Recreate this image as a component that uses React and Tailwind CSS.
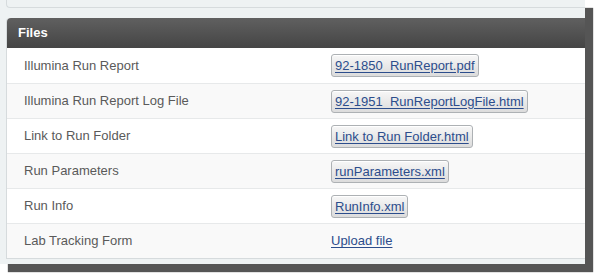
import React from 'react';

const rows = [
  { label: 'Illumina Run Report', file: '92-1850_RunReport.pdf' },
  { label: 'Illumina Run Report Log File', file: '92-1951_RunReportLogFile.html' },
  { label: 'Link to Run Folder', file: 'Link to Run Folder.html' },
  { label: 'Run Parameters', file: 'runParameters.xml' },
  { label: 'Run Info', file: 'RunInfo.xml' },
  { label: 'Lab Tracking Form', upload: 'Upload file' },
];

const FileButton = ({ name }) => (
  <span className="inline-flex h-[23px] items-center rounded-[3px] border border-[#adb1b4] bg-gradient-to-b from-[#f7f7f7] to-[#dcdcdc] px-[3px] shadow-[inset_0_1px_0_#fff]">
    <a href="#" className="text-[13px] leading-none text-[#2c4d8c] underline underline-offset-2">
      {name}
    </a>
  </span>
);

const App = () => {
  return (
    <div className="h-[280px] w-[599px] bg-white" style={{ fontFamily: '"Liberation Sans", Arial, sans-serif' }}>
      <div className="h-[264px] w-[585px] overflow-hidden bg-[#eef2f3] shadow-[8px_8px_1px_#555]">
        {/* top panel tail */}
        <div className="-mt-[4px] ml-[6px] h-[12px] w-[620px] rounded-bl-[4px] border-b border-l border-[#d6dbdd] bg-[#eef2f3]" />

        {/* Files panel */}
        <div className="ml-[6px] mt-[10px] w-[620px] rounded-t-[4px] border-b border-l border-[#d6dbdd] bg-white">
          <div className="flex h-[30px] items-center rounded-tl-[4px] bg-gradient-to-b from-[#606060] to-[#454545] px-[11px]">
            <h3 className="text-[13px] font-bold text-white">Files</h3>
          </div>
          {rows.map((row, i) => (
            <div
              key={row.label}
              className={`flex h-[35px] items-center text-[13px] ${i % 2 === 1 ? 'bg-[#f9f9f9]' : 'bg-white'} ${i > 0 ? 'border-t border-[#e7e9ea]' : ''}`}
            >
              <div className="w-[324px] pl-[17px] text-[#5a5a5a]">{row.label}</div>
              <div>
                {row.file ? (
                  <FileButton name={row.file} />
                ) : (
                  <a href="#" className="text-[#2c4d8c] underline underline-offset-2">
                    {row.upload}
                  </a>
                )}
              </div>
            </div>
          ))}
        </div>
      </div>
    </div>
  );
};

export default App;
